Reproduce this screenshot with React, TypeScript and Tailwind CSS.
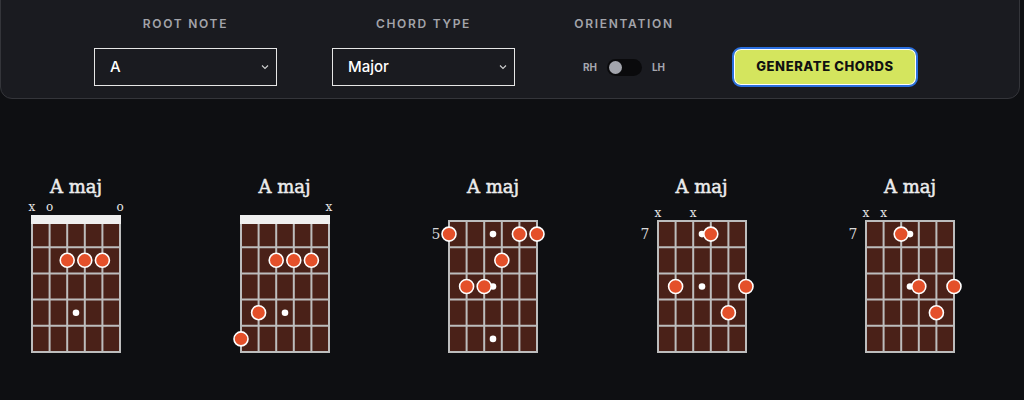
type Marker = { s: number; t: "x" | "o" }

interface Chord {
  fret?: number
  nut: boolean
  markers: Marker[]
  dots: [number, number][]
  inlays: number[]
}

const chords: Chord[] = [
  {
    nut: true,
    markers: [
      { s: 0, t: "x" },
      { s: 1, t: "o" },
      { s: 5, t: "o" },
    ],
    dots: [
      [2, 2],
      [3, 2],
      [4, 2],
    ],
    inlays: [4],
  },
  {
    nut: true,
    markers: [{ s: 5, t: "x" }],
    dots: [
      [2, 2],
      [3, 2],
      [4, 2],
      [1, 4],
      [0, 5],
    ],
    inlays: [4],
  },
  {
    fret: 5,
    nut: false,
    markers: [],
    dots: [
      [0, 1],
      [4, 1],
      [5, 1],
      [3, 2],
      [1, 3],
      [2, 3],
    ],
    inlays: [1, 3, 5],
  },
  {
    fret: 7,
    nut: false,
    markers: [
      { s: 0, t: "x" },
      { s: 2, t: "x" },
    ],
    dots: [
      [3, 1],
      [1, 3],
      [5, 3],
      [4, 4],
    ],
    inlays: [1, 3],
  },
  {
    fret: 7,
    nut: false,
    markers: [
      { s: 0, t: "x" },
      { s: 1, t: "x" },
    ],
    dots: [
      [2, 1],
      [3, 3],
      [5, 3],
      [4, 4],
    ],
    inlays: [1, 3],
  },
]

// grid geometry inside each svg
const GX = 24
const GW = 88
const GY = 21
const GH = 131
const SX = GW / 5
const FY = GH / 5
const sx = (s: number) => GX + s * SX
const fy = (r: number) => GY + (r - 0.5) * FY

function ChordDiagram({ chord }: { chord: Chord }) {
  const markerY = chord.nut ? 10.5 : 17
  return (
    <div className="flex w-[136px] flex-col items-center">
      <div className="h-[24px] text-[18px] leading-[24px] text-[#ececec] [-webkit-text-stroke:0.5px_#ececec] [font-family:'DejaVu_Serif',serif]">
        A maj
      </div>
      <svg width={136} height={160} viewBox="0 0 136 160" className="mt-[1px] overflow-visible">
        <rect x={GX} y={GY} width={GW} height={GH} fill="#4a2118" />
        {chord.inlays.map((r) => (
          <circle key={`in-${r}`} cx={GX + GW / 2} cy={fy(r)} r={3.3} fill="#ffffff" />
        ))}
        {Array.from({ length: 6 }).map((_, i) => (
          <line
            key={`s-${i}`}
            x1={sx(i)}
            x2={sx(i)}
            y1={GY}
            y2={GY + GH}
            stroke="#bdbdbd"
            strokeWidth={2}
          />
        ))}
        {Array.from({ length: 6 }).map((_, i) => (
          <line
            key={`f-${i}`}
            x1={GX - 1}
            x2={GX + GW + 1}
            y1={GY + i * FY}
            y2={GY + i * FY}
            stroke="#bdbdbd"
            strokeWidth={2}
          />
        ))}
        {chord.nut && <rect x={GX - 1} y={15} width={GW + 2} height={9} fill="#efefef" />}
        {chord.fret && (
          <text
            x={GX - 13}
            y={fy(1) + 5}
            textAnchor="middle"
            fontSize={14}
            fill="#d8d8d8"
            fontFamily="'DejaVu Serif', serif"
          >
            {chord.fret}
          </text>
        )}
        {chord.markers.map((m) => (
          <text
            key={`m-${m.s}`}
            x={sx(m.s)}
            y={markerY}
            textAnchor="middle"
            fontSize={12}
            fill="#e5e5e5"
            fontFamily="'DejaVu Serif', serif"
          >
            {m.t}
          </text>
        ))}
        {chord.dots.map(([s, r]) => (
          <circle
            key={`d-${s}-${r}`}
            cx={sx(s)}
            cy={fy(r)}
            r={7}
            fill="#e4502a"
            stroke="#ffffff"
            strokeWidth={1.6}
          />
        ))}
      </svg>
    </div>
  )
}

function SelectBox({ value }: { value: string }) {
  return (
    <div className="flex h-[38px] w-[183px] items-center justify-between border border-[#e6e6e6] pl-[15px] pr-[6px] text-[15px] font-medium text-white">
      <span>{value}</span>
      <svg width="10" height="8" viewBox="0 0 10 8">
        <path d="M2 2.5 L5 5.5 L8 2.5" fill="none" stroke="#d0d0d0" strokeWidth="1.1" />
      </svg>
    </div>
  )
}

function FieldLabel({ children }: { children: React.ReactNode }) {
  return (
    <div className="h-[16px] text-center text-[12px] font-semibold leading-[16px] tracking-[1.7px] text-[#a3a4aa]">
      {children}
    </div>
  )
}

export default function App() {
  return (
    <div className="h-[400px] w-[1024px] overflow-hidden bg-[#0e0f12] [font-family:Inter,sans-serif]">
      <div className="-mt-[12px] h-[111px] w-[1020px] rounded-[12px] border border-[#34353a] bg-[#1a1b20] pt-[27px]">
        <div className="flex pl-[93px]">
          <div className="flex w-[183px] flex-col gap-[16px]">
            <FieldLabel>ROOT NOTE</FieldLabel>
            <SelectBox value="A" />
          </div>
          <div className="ml-[55px] flex w-[183px] flex-col gap-[16px]">
            <FieldLabel>CHORD TYPE</FieldLabel>
            <SelectBox value="Major" />
          </div>
          <div className="ml-[59px] flex w-[100px] flex-col gap-[16px]">
            <FieldLabel>ORIENTATION</FieldLabel>
            <div className="flex h-[38px] items-center justify-center gap-[10px] text-[10px] font-bold text-[#a5a7ae]">
              <span>RH</span>
              <div className="flex h-[17px] w-[35px] items-center rounded-full bg-[#0a0a0c] px-[2px]">
                <div className="h-[13px] w-[13px] rounded-full bg-[#a3a5ad]" />
              </div>
              <span>LH</span>
            </div>
          </div>
          <div className="ml-[58px] flex flex-col gap-[16px]">
            <div className="h-[16px]" />
            <button className="-mt-[1px] flex h-[40px] w-[186px] items-center justify-center rounded-[9px] border-2 border-[#2b6fe0] bg-[#d4e55e] text-[13px] font-extrabold tracking-[0.6px] text-[#111] shadow-[inset_0_0_0_1px_#ffffff]">
              GENERATE CHORDS
            </button>
          </div>
        </div>
      </div>
      <div className="flex gap-[72.5px] pl-[8px] pt-[76px]">
        {chords.map((c, i) => (
          <ChordDiagram key={i} chord={c} />
        ))}
      </div>
    </div>
  )
}
